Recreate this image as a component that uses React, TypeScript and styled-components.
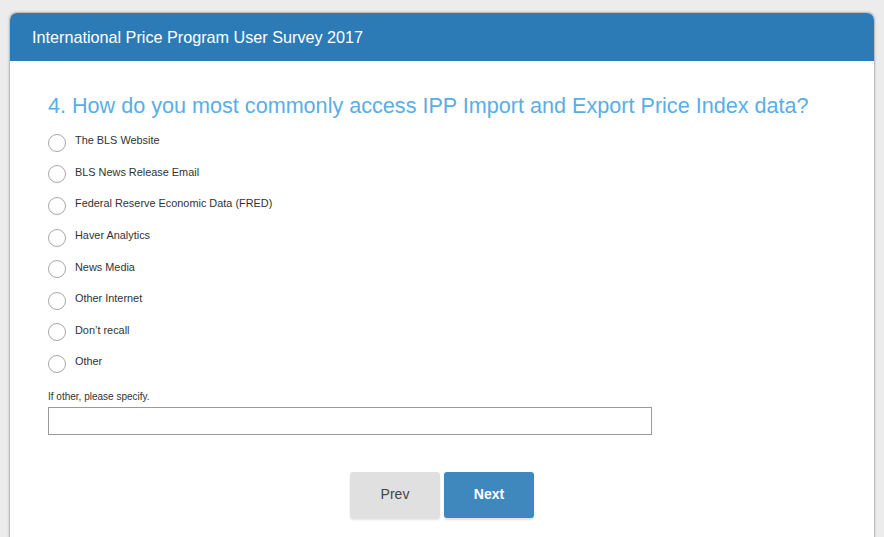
import styled, { createGlobalStyle } from 'styled-components'

const options = [
  'The BLS Website',
  'BLS News Release Email',
  'Federal Reserve Economic Data (FRED)',
  'Haver Analytics',
  'News Media',
  'Other Internet',
  'Don’t recall',
  'Other',
]

export default function App() {
  return (
    <>
      <GlobalStyle />
      <Card>
        <Header>International Price Program User Survey 2017</Header>
        <Body>
          <Question>4. How do you most commonly access IPP Import and Export Price Index data?</Question>
          <OptionList>
            {options.map((opt) => (
              <Option key={opt}>
                <Radio />
                <OptionLabel>{opt}</OptionLabel>
              </Option>
            ))}
          </OptionList>
          <SpecifyLabel>If other, please specify.</SpecifyLabel>
          <SpecifyInput type="text" />
          <Buttons>
            <NavButton>Prev</NavButton>
            <NavButton $primary>Next</NavButton>
          </Buttons>
        </Body>
      </Card>
    </>
  )
}

const GlobalStyle = createGlobalStyle`
  body {
    margin: 0;
    background: #ececec;
    font-family: "Liberation Sans", Arial, sans-serif;
  }
`

const Card = styled.div`
  margin: 13px 10px 0;
  background: #fff;
  border-radius: 7px 7px 0 0;
  box-shadow: 0 0 2px 1px rgba(0, 0, 0, 0.25);
  height: 530px;
  overflow: hidden;
`

const Header = styled.div`
  height: 48px;
  background: #2d7bb6;
  color: #fff;
  font-size: 16.2px;
  display: flex;
  align-items: center;
  padding-left: 22px;
`

const Body = styled.div`
  padding: 32px 38px 0;
  display: flex;
  flex-direction: column;
`

const Question = styled.h2`
  margin: 0 0 9px;
  font-weight: normal;
  font-size: 21.6px;
  line-height: 25px;
  color: #5aaee6;
`

const OptionList = styled.div`
  display: flex;
  flex-direction: column;
`

const Option = styled.label`
  height: 31.6px;
  display: flex;
  align-items: center;
`

const Radio = styled.span`
  width: 16px;
  height: 16px;
  border: 1px solid #a8a8a8;
  border-radius: 50%;
  margin-right: 9px;
  flex-shrink: 0;
`

const OptionLabel = styled.span`
  font-size: 10.9px;
  color: #333;
  margin-top: -5px;
`

const SpecifyLabel = styled.div`
  font-size: 10px;
  color: #333;
  margin-top: 11px;
  margin-bottom: 5px;
`

const SpecifyInput = styled.input`
  width: 604px;
  height: 28px;
  box-sizing: border-box;
  border: 1px solid #999;
  outline: none;
  margin: 0;
`

const Buttons = styled.div`
  display: flex;
  justify-content: center;
  gap: 4px;
  margin-top: 37px;
`

const NavButton = styled.button<{ $primary?: boolean }>`
  width: 90px;
  height: 46px;
  border: none;
  border-radius: 3px;
  font-family: "Liberation Sans", Arial, sans-serif;
  font-size: 14px;
  padding-bottom: 2px;
  background: ${(p) => (p.$primary ? '#3f88be' : '#e0e0e0')};
  color: ${(p) => (p.$primary ? '#fff' : '#444')};
  font-weight: ${(p) => (p.$primary ? 'bold' : 'normal')};
  box-shadow: 0 2px 2px rgba(0, 0, 0, 0.12);
`
